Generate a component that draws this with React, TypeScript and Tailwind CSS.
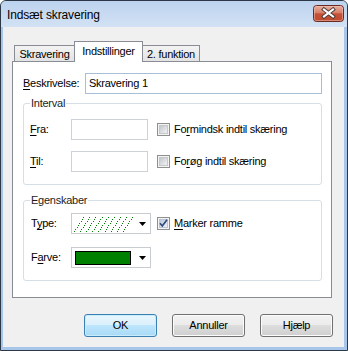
import React from "react";

function U({ children }: { children: React.ReactNode }) {
  return <span className="underline decoration-1 underline-offset-[2px]">{children}</span>;
}

function CheckBox({ checked }: { checked?: boolean }) {
  return (
    <div className="relative w-[13px] h-[13px] shrink-0 border border-[#8f8f8f] bg-[#f4f4f4] p-[1px]">
      <div
        className={
          checked
            ? "w-full h-full border border-[#b9c4d4] bg-[linear-gradient(135deg,#b9c7da,#eef3f9)]"
            : "w-full h-full border border-[#c4c7cc] bg-[linear-gradient(135deg,#c3c7cd,#f1f2f3)]"
        }
      />
      {checked && (
        <svg width="13" height="13" viewBox="0 0 13 13" className="absolute left-[-1px] top-[-1px]">
          <path d="M3 6.2 L5.3 9 L10 2.8" fill="none" stroke="#34497a" strokeWidth="1.7" />
        </svg>
      )}
    </div>
  );
}

function Arrow() {
  return (
    <svg width="7" height="4" viewBox="0 0 7 4" className="ml-auto mr-[4px] shrink-0">
      <polygon points="0,0 7,0 3.5,4" fill="#000" />
    </svg>
  );
}

function Hatch() {
  const dots: { x: number; y: number }[] = [];
  for (let i = 0; i < 9; i++) {
    const x0 = i * 6.1;
    for (let y = 15; y >= 0; y -= 2) {
      const x = Math.round(x0 + (15 - y) * 0.66);
      if (x >= 0 && x < 60) dots.push({ x, y });
    }
  }
  return (
    <svg width="60" height="16" viewBox="0 0 60 16" shapeRendering="crispEdges">
      {dots.map((d, k) => (
        <rect key={k} x={d.x} y={d.y} width="1" height="1" fill="#008000" />
      ))}
    </svg>
  );
}

function CloseButton() {
  return (
    <svg width="31" height="17" viewBox="0 0 31 17" className="mt-[4px] shrink-0">
      <defs>
        <linearGradient id="cg" x1="0" y1="0" x2="0" y2="1">
          <stop offset="0" stopColor="#e8b0a2" />
          <stop offset="0.45" stopColor="#d7806a" />
          <stop offset="0.52" stopColor="#c65138" />
          <stop offset="1" stopColor="#bd4a2f" />
        </linearGradient>
      </defs>
      <rect x="0.5" y="0.5" width="30" height="16" rx="3" fill="url(#cg)" stroke="#6a2a22" />
      <rect x="1.5" y="1.5" width="28" height="14" rx="2" fill="none" stroke="#f2c9bd" strokeOpacity="0.5" />
      <path d="M11 4.5 L20 11.5 M20 4.5 L11 11.5" stroke="#4a3a3a" strokeWidth="4" strokeLinecap="square" />
      <path d="M11 4.5 L20 11.5 M20 4.5 L11 11.5" stroke="#ffffff" strokeWidth="2.1" strokeLinecap="square" />
    </svg>
  );
}

function Button({ children, primary }: { children: React.ReactNode; primary?: boolean }) {
  return (
    <div
      className={
        primary
          ? "w-[73px] h-[23px] rounded-[3px] border border-[#3c7fb1] shadow-[inset_0_0_0_1px_#c9ecfc] bg-[linear-gradient(#eaf6fd_0%,#d9f0fc_50%,#bee6fd_50%,#a7d9f5_100%)] flex items-center justify-center"
          : "w-[73px] h-[23px] rounded-[3px] border border-[#707070] shadow-[inset_0_0_0_1px_#fcfcfc] bg-[linear-gradient(#f2f2f2_0%,#ebebeb_50%,#dddddd_50%,#cfcfcf_100%)] flex items-center justify-center"
      }
    >
      {children}
    </div>
  );
}

export default function App() {
  return (
    <div className="w-[348px] h-[351px] flex flex-col border border-[#2c3846] rounded-t-[6px] overflow-hidden bg-[#a8c6e9] font-['Liberation_Sans',Arial,sans-serif] text-[11px] leading-[13px] tracking-[-0.25px] text-black">
      {/* Title bar */}
      <div className="h-[26px] shrink-0 flex items-start justify-between pl-[6px] pr-[3px] bg-[linear-gradient(#bcd2ee,#d3e2f4)]">
        <span className="mt-[7px] text-[12px] leading-[14px] tracking-[-0.15px]">Indsæt skravering</span>
        <CloseButton />
      </div>

      {/* Body */}
      <div className="flex-1 ml-[2px] mr-[3px] mb-[3px] bg-[#f0f0f0] flex flex-col pl-[9px] pt-[14px]">
        {/* Tabs */}
        <div className="flex items-end h-[20px] pl-[2px]">
          <div className="w-[61px] h-[16px] border border-b-0 border-[#898c95] bg-[linear-gradient(#f3f3f3,#e3e3e3)] flex items-center justify-center pt-[1px]">
            Skravering
          </div>
          <div className="relative z-10 -ml-px -mb-px w-[69px] h-[21px] border border-b-0 border-[#898c95] bg-white flex items-center justify-center pb-[1px]">
            Indstillinger
          </div>
          <div className="-ml-px w-[58px] h-[16px] border border-b-0 border-[#898c95] bg-[linear-gradient(#f3f3f3,#e3e3e3)] flex items-center justify-center pt-[1px]">
            2. funktion
          </div>
        </div>

        {/* Panel */}
        <div className="w-[320px] h-[237px] shrink-0 border border-[#898c95] bg-white pl-[10px] pr-[9px] pt-[11px] flex flex-col">
          <div className="flex items-center h-[21px]">
            <span className="w-[62px] shrink-0">
              <U>B</U>eskrivelse:
            </span>
            <div className="flex-1 h-[21px] border border-[#a8bed6] flex items-center pl-[3px]">Skravering 1</div>
          </div>

          {/* Interval */}
          <div className="relative mt-[9px] h-[82px] shrink-0 border border-[#d5dfe5] rounded-[3px] pl-[6px] pt-[15px] flex flex-col gap-[11px]">
            <span className="absolute left-[6px] top-[-7px] bg-white px-px leading-[13px] text-[#1c1c1c]">Interval</span>
            <div className="flex items-center h-[21px]">
              <span className="w-[41px] shrink-0">
                <U>F</U>ra:
              </span>
              <div className="w-[77px] h-[21px] border border-[#cdd2d9] bg-white" />
              <div className="ml-[9px]">
                <CheckBox />
              </div>
              <span className="ml-[4px]">
                Fo<U>r</U>mindsk indtil skæring
              </span>
            </div>
            <div className="flex items-center h-[21px]">
              <span className="w-[41px] shrink-0">
                <U>T</U>il:
              </span>
              <div className="w-[77px] h-[21px] border border-[#cdd2d9] bg-white" />
              <div className="ml-[9px]">
                <CheckBox />
              </div>
              <span className="ml-[4px]">
                Fo<U>r</U>øg indtil skæring
              </span>
            </div>
          </div>

          {/* Egenskaber */}
          <div className="relative mt-[15px] h-[81px] shrink-0 border border-[#d5dfe5] rounded-[3px] pl-[7px] pt-[12px] flex flex-col gap-[13px]">
            <span className="absolute left-[6px] top-[-7px] bg-white px-px leading-[13px] text-[#1c1c1c]">Egenskaber</span>
            <div className="flex items-center h-[21px]">
              <span className="w-[40px] shrink-0">
                T<U>y</U>pe:
              </span>
              <div className="w-[80px] h-[21px] border border-[#c8cbd0] bg-white flex items-center pl-[2px]">
                <Hatch />
                <Arrow />
              </div>
              <div className="ml-[6px]">
                <CheckBox checked />
              </div>
              <span className="ml-[4px]">
                <U>M</U>arker ramme
              </span>
            </div>
            <div className="flex items-center h-[21px]">
              <span className="w-[40px] shrink-0">
                F<U>a</U>rve:
              </span>
              <div className="w-[80px] h-[21px] border border-[#c8cbd0] bg-white flex items-center pl-[3px]">
                <div className="w-[56px] h-[14px] border border-black bg-[#008000]" />
                <Arrow />
              </div>
            </div>
          </div>
        </div>

        {/* Buttons */}
        <div className="flex justify-end gap-[15px] pr-[11px] mt-[16px]">
          <Button primary>OK</Button>
          <Button>Annuller</Button>
          <Button>Hjælp</Button>
        </div>
      </div>
    </div>
  );
}
